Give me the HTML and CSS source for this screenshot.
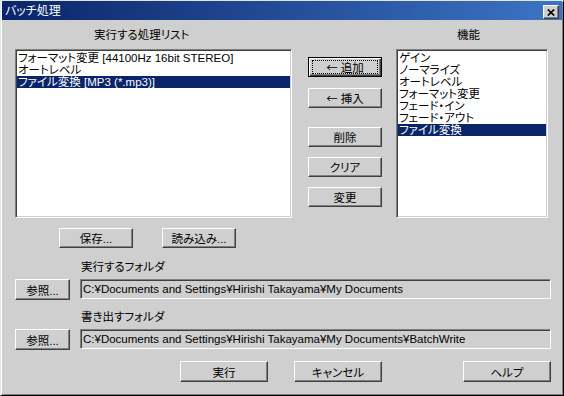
FILE: index.html
```html
<!DOCTYPE html>
<html lang="ja">
  <head>
    <meta charset="UTF-8" />
    <meta name="viewport" content="width=device-width, initial-scale=1.0" />
    <title>バッチ処理</title>
    <link rel="stylesheet" href="styles.css">
  </head>
  <body>
    <div class="window">
      <div class="titlebar">
        <span class="title">バッチ処理</span>
        <span class="close">
          <svg width="8" height="7" viewBox="0 0 8 7">
            <path d="M0.8 0.5 L7.2 6.5 M7.2 0.5 L0.8 6.5" stroke="#000" stroke-width="1.7" fill="none" />
          </svg>
        </span>
      </div>

      <div class="content">
        <div class="lists">
          <div class="col col-left">
            <div class="caption caption-left">実行する処理リスト</div>
            <div class="listbox listbox-left">
              <div class="item">フォーマット変更 [44100Hz 16bit STEREO]</div>
              <div class="item">オートレベル</div>
              <div class="item selected">ファイル変換 [MP3 (*.mp3)]</div>
            </div>
          </div>

          <div class="actions">
            <button class="btn btn-default"><span class="focus"><span class="arrow">←</span>&nbsp;追加</span></button>
            <button class="btn btn-insert"><span class="arrow">←</span>&nbsp;挿入</button>
            <button class="btn btn-delete">削除</button>
            <button class="btn btn-small-gap">クリア</button>
            <button class="btn btn-small-gap">変更</button>
          </div>

          <div class="col col-right">
            <div class="caption caption-right">機能</div>
            <div class="listbox listbox-right">
              <div class="item">ゲイン</div>
              <div class="item">ノーマライズ</div>
              <div class="item">オートレベル</div>
              <div class="item">フォーマット変更</div>
              <div class="item">フェード・イン</div>
              <div class="item">フェード・アウト</div>
              <div class="item selected">ファイル変換</div>
            </div>
          </div>
        </div>

        <div class="save-row">
          <button class="btn btn-file">保存...</button>
          <button class="btn btn-file">読み込み...</button>
        </div>

        <div class="folder">
          <div class="folder-label">実行するフォルダ</div>
          <div class="folder-row">
            <button class="btn btn-browse">参照...</button>
            <div class="path">C:¥Documents and Settings¥Hirishi Takayama¥My Documents</div>
          </div>
        </div>

        <div class="folder folder-second">
          <div class="folder-label">書き出すフォルダ</div>
          <div class="folder-row">
            <button class="btn btn-browse">参照...</button>
            <div class="path">C:¥Documents and Settings¥Hirishi Takayama¥My Documents¥BatchWrite</div>
          </div>
        </div>

        <div class="footer">
          <button class="btn btn-footer">実行</button>
          <button class="btn btn-footer btn-cancel">キャンセル</button>
          <button class="btn btn-footer btn-help">ヘルプ</button>
        </div>
      </div>
    </div>
  </body>
</html>
```

FILE: styles.css
```css
body {
  margin: 0;
  font-family: "Liberation Sans", "Noto Sans CJK JP", sans-serif;
  font-size: 11.5px;
  font-feature-settings: "palt";
  color: #000;
  background: #cfcfcf;
}
.window {
  width: 564px;
  height: 396px;
  box-sizing: border-box;
  background: #cfcfcf;
  border: 1px solid;
  border-color: #e4e4e4 #000 #000 #e4e4e4;
  box-shadow: inset 1px 1px #fff, inset -1px -1px #808080;
  padding: 0 1px 1px 1px;
}
.titlebar {
  height: 19px;
  display: flex;
  align-items: center;
  justify-content: space-between;
  background: linear-gradient(to right, #0a246a, #3c74c4);
  padding: 0 3px 0 3px;
}
.title {
  color: #fff;
  font-size: 12px;
  line-height: 14px;
}
.close {
  width: 14px;
  height: 12px;
  margin-top: 3px;
  display: flex;
  align-items: center;
  justify-content: center;
  background: #cfcfcf;
  border: 1px solid;
  border-color: #fff #404040 #404040 #fff;
  box-shadow: inset -1px -1px #808080;
}
.content {
  padding: 8px 0 0 13px;
}
.lists {
  display: flex;
  align-items: flex-start;
}
.caption {
  height: 14px;
  line-height: 14px;
  margin-bottom: 7px;
  white-space: nowrap;
}
.caption-left {
  padding-left: 79px;
}
.caption-right {
  padding-left: 61px;
}
.listbox {
  height: 169px;
  box-sizing: border-box;
  background: #fff;
  border: 1px solid;
  border-color: #808080 #fff #fff #808080;
  box-shadow: inset 1px 1px #404040, inset -1px -1px #cfcfcf;
  padding: 2px 1px;
}
.listbox-left {
  width: 277px;
}
.listbox-right {
  width: 152px;
}
.item {
  height: 12px;
  line-height: 12px;
  padding-left: 1px;
  white-space: nowrap;
}
.item.selected {
  background: #0a246a;
  color: #fff;
}
.actions {
  display: flex;
  flex-direction: column;
  width: 74px;
  margin: 0 14px 0 16px;
  padding-top: 29px;
}
.btn {
  font: inherit;
  color: #000;
  background: #cfcfcf;
  border: 1px solid;
  border-color: #fff #404040 #404040 #fff;
  box-shadow: inset -1px -1px #808080;
  height: 20px;
  padding: 0;
  display: flex;
  align-items: center;
  justify-content: center;
  white-space: nowrap;
}
.actions .btn {
  width: 74px;
}
.arrow {
  font-family: "Noto Sans CJK JP", sans-serif;
}
.btn-default {
  border-color: #000;
  box-shadow: inset 1px 1px #fff, inset -1px -1px #404040, inset -2px -2px #808080;
  padding: 2px 3px;
}
.focus {
  flex: 1;
  align-self: stretch;
  display: flex;
  align-items: center;
  justify-content: center;
  border: 1px dotted #000;
}
.btn-insert {
  margin-top: 11px;
}
.btn-delete {
  margin-top: 19px;
}
.btn-small-gap {
  margin-top: 10px;
}
.save-row {
  display: flex;
  gap: 29px;
  margin: 10px 0 0 44px;
}
.btn-file {
  width: 74px;
}
.folder {
  margin-top: 12px;
}
.folder-second {
  margin-top: 10px;
}
.folder-label {
  height: 14px;
  line-height: 14px;
  padding-left: 66px;
  margin-bottom: 5px;
}
.folder-row {
  display: flex;
  align-items: flex-start;
  gap: 10px;
}
.btn-browse {
  width: 55px;
  height: 21px;
}
.path {
  width: 471px;
  height: 20px;
  box-sizing: border-box;
  border: 1px solid;
  border-color: #808080 #fff #fff #808080;
  box-shadow: inset 1px 1px #404040, inset -1px -1px #cfcfcf;
  padding-left: 2px;
  line-height: 18px;
  white-space: nowrap;
  overflow: hidden;
}
.footer {
  display: flex;
  margin: 11px 0 0 165px;
}
.btn-footer {
  width: 88px;
  height: 21px;
}
.btn-cancel {
  margin-left: 26px;
}
.btn-help {
  margin-left: 81px;
}
```
